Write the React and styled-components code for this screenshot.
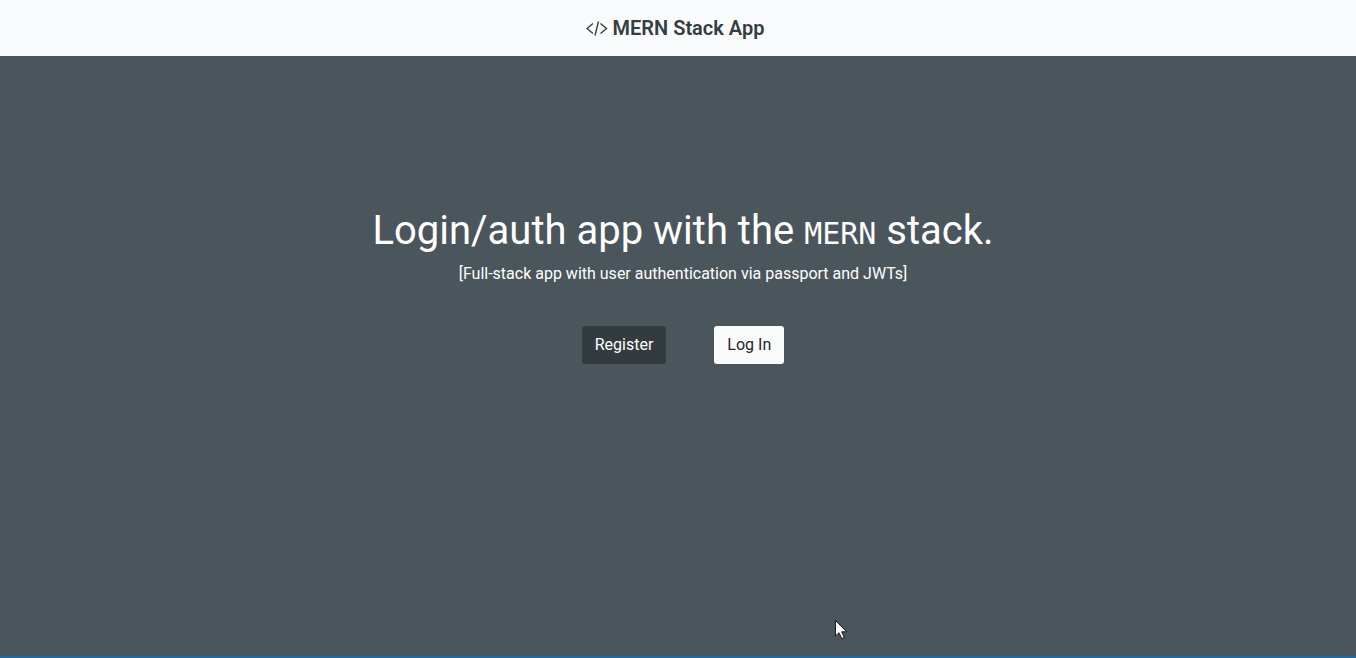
import React from "react";
import styled, { createGlobalStyle } from "styled-components";

const GlobalStyle = createGlobalStyle`
  *, *::before, *::after { box-sizing: border-box; }
  body {
    margin: 0;
    font-family: Roboto, "Liberation Sans", sans-serif;
    font-size: 16px;
    line-height: 24px;
    color: #fff;
    background: #4b555c;
  }
`;

const Page = styled.div`
  min-height: 100vh;
  display: flex;
  flex-direction: column;
  border-bottom: 2px solid #1d6ba5;
`;

const Navbar = styled.header`
  display: flex;
  justify-content: center;
  padding: 8px 16px 8px 10px;
  background: #fafbfd;
`;

const Brand = styled.a`
  display: flex;
  align-items: center;
  gap: 5px;
  height: 40px;
  color: #343d42;
  font-size: 20px;
  font-weight: 600;
  line-height: 30px;
  text-decoration: none;
`;

const Hero = styled.main`
  flex: 1;
  display: flex;
  flex-direction: column;
  align-items: center;
  padding: 151px 0 16px 10px;
  text-align: center;
`;

const Title = styled.h1`
  margin: 0 0 4px;
  font-size: 40px;
  font-weight: 400;
  line-height: 48px;
`;

const Code = styled.code`
  font-family: "DejaVu Sans Mono", "Liberation Mono", monospace;
  font-size: 30px;
`;

const Subtitle = styled.p`
  margin: 0;
`;

const Actions = styled.div`
  display: flex;
  gap: 48px;
  margin-top: 40px;
`;

const Button = styled.button`
  height: 38px;
  padding: 0 13px;
  border: 0;
  border-radius: 3px;
  font: inherit;
  cursor: pointer;
  color: ${(p) => (p.$light ? "#212529" : "#fff")};
  background: ${(p) => (p.$light ? "#fafbfd" : "#333b3f")};
`;

const Pointer = styled.svg`
  position: absolute;
  left: 834px;
  top: 619px;
  pointer-events: none;
`;

export default function App() {
  return (
    <Page>
      <GlobalStyle />
      <Navbar>
        <Brand href="#">
          <svg width="22" height="16" viewBox="0 0 22 16" fill="none" stroke="currentColor" strokeWidth="1.4" aria-hidden="true">
            <path d="M7 3.500 1 8.500 7 13.500M14.500 3.500l6 5-6 5M12.500 1.500 9 15.500" />
          </svg>
          MERN Stack App
        </Brand>
      </Navbar>
      <Hero>
        <Title>
          Login/auth app with the <Code>MERN</Code> stack.
        </Title>
        <Subtitle>[Full-stack app with user authentication via passport and JWTs]</Subtitle>
        <Actions>
          <Button type="button">Register</Button>
          <Button type="button" $light>Log In</Button>
        </Actions>
      </Hero>
      <Pointer width="14" height="21" viewBox="0 0 14 21" aria-hidden="true">
        <path d="M1.500 1.500v15.500l3.500-3.300 2.700 5.900 2.600-1.100-2.600-5.700h5z" fill="#fff" stroke="#15181c" strokeWidth="1" />
      </Pointer>
    </Page>
  );
}
